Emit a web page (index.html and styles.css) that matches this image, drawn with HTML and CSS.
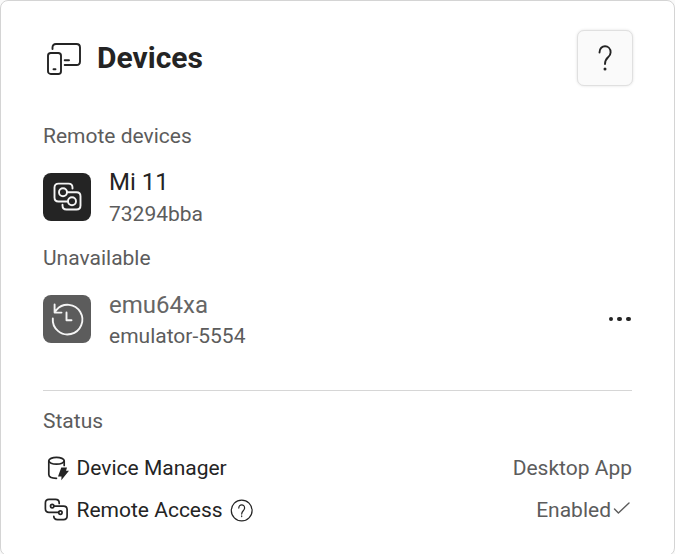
FILE: index.html
```html
<!DOCTYPE html>
<html lang="en">
<head>
<meta charset="utf-8">
<title>Devices</title>
<link rel="stylesheet" href="styles.css">
</head>
<body>
<main class="card">
  <header class="header">
    <svg class="header-icon" width="36" height="34" viewBox="0 0 36 34">
      <path d="M5.500 7V5.500Q5.500 2 9 2H29.500Q33 2 33 5.500V19.500Q33 23 29.500 23H17.700M17.700 18.300H22"/>
      <rect x="1" y="11" width="13" height="21" rx="2.800"/>
      <path d="M6.500 27.200H8.500"/>
    </svg>
    <h1 class="title">Devices</h1>
    <button class="help" aria-label="Help">
      <svg width="16" height="28" viewBox="0 0 16 28"><path d="M2.500 8.500C2.500 0 13.700 .5 13.600 8.400C13.500 14 8 12.500 8 20"/><circle cx="8" cy="25" r="1.500"/></svg>
    </button>
  </header>

  <h2 class="label">Remote devices</h2>
  <section class="device">
    <div class="tile">
      <svg width="48" height="48" viewBox="0 0 48 48"><path d="M29.500 15.500V14.500Q29.500 10.600 25.500 10.600H15.500Q11.500 10.600 11.500 14.500V24.500Q11.500 28.500 15.500 28.500H25M24 19.200H33.500Q37.500 19.200 37.500 23.200V32.500Q37.500 36.500 33.500 36.500H23.500Q19.500 36.500 19.500 32.500V31.700"/><circle cx="20" cy="19.200" r="4"/><circle cx="29" cy="28.200" r="4"/></svg>
    </div>
    <div class="info"><span class="name">Mi 11</span><span class="serial">73294bba</span></div>
  </section>

  <h2 class="label">Unavailable</h2>
  <section class="device offline">
    <div class="tile">
      <svg width="48" height="48" viewBox="0 0 48 48"><path d="M9.800 23.500A14.800 14.800 0 1 0 13.500 14.800L11.800 17M11.600 9.500V17.600H18.500M23.500 17.500V25.300H28.500"/></svg>
    </div>
    <div class="info"><span class="name">emu64xa</span><span class="serial">emulator-5554</span></div>
    <button class="more" aria-label="More"><i></i><i></i><i></i></button>
  </section>

  <section class="status">
    <h2 class="label">Status</h2>
    <div class="row">
      <svg class="row-icon" width="26" height="26" viewBox="0 0 26 26"><ellipse cx="13.500" cy="5.800" rx="7.700" ry="3.400"/><path d="M5.800 6V19.500C5.800 22 9.500 23.200 13.500 23.300M21.200 6V10.500"/><path class="solid" d="M18.300 12.500H24L23 15.800H26L18.300 25.300L18.500 21.500H15Z"/></svg>
      <span class="key">Device Manager</span>
      <span class="value">Desktop App</span>
    </div>
    <div class="row">
      <svg class="row-icon" width="26" height="26" viewBox="0 0 26 26"><path d="M16.200 6.500V6Q16.200 2.300 12.500 2.300H6Q2.400 2.300 2.400 6V11.800Q2.400 15.400 6 15.400H15.500M11 9.100H20.500Q24.100 9.100 24.100 12.700V19Q24.100 22.600 20.500 22.600H14.500Q10.800 22.600 10.800 19.300"/><circle cx="9.200" cy="9.100" r="1.700"/><circle cx="17.400" cy="15.600" r="1.700"/></svg>
      <span class="key">Remote Access</span>
      <svg class="hint" width="24" height="24" viewBox="0 0 24 24"><circle cx="11.700" cy="12.500" r="10.400"/><path d="M8.800 10.100C8.800 5.700 14.700 5.900 14.600 10C14.500 13 11.700 12.500 11.700 16.100M11.700 17.900V18.600"/></svg>
      <span class="value">Enabled<svg class="check" width="21" height="18" viewBox="0 0 21 18"><path d="M3.500 8L7.400 12L18 2"/></svg></span>
    </div>
  </section>
</main>
</body>
</html>
```

FILE: styles.css
```css
* { box-sizing: border-box; }
html { height: 100%; overflow: hidden; }
body {
  margin: 0;
  background: #fafafa;
  color: #242424;
  font: 21px/28px Roboto, "Liberation Sans", sans-serif;
}
svg { display: block; flex: none; fill: none; stroke: currentColor; stroke-width: 1.900; stroke-linecap: round; stroke-linejoin: round; }
button { padding: 0; color: inherit; font: inherit; }
.card {
  height: 556px;
  padding: 29px 42px 0;
  background: #fff;
  border: 1px solid #d4d4d4;
  border-radius: 8px;
}
.header { display: flex; align-items: center; height: 56px; margin-bottom: 36px; }
.header-icon { margin: 2px 14px 0 4px; }
.title { flex: 1; margin: 0; font-size: 30px; font-weight: 700; line-height: 40px; }
.help {
  display: grid;
  place-items: center;
  width: 56px;
  height: 56px;
  margin-right: -1px;
  background: #fafafa;
  border: 1px solid #e0e0e0;
  border-radius: 7px;
  box-shadow: 0 0 3px rgba(0, 0, 0, .12);
}
.help circle { fill: currentColor; stroke: none; }
.label { margin: 0; color: #5c5c5c; font-size: 21px; font-weight: 400; line-height: 28px; }
.device { display: flex; align-items: center; height: 94px; }
.tile { width: 48px; height: 48px; margin-right: 18px; border-radius: 8px; background: #242424; color: #f5f5f5; }
.info { display: flex; flex-direction: column; padding-top: 2px; }
.name { font-size: 24px; line-height: 32px; }
.serial { color: #5c5c5c; font-size: 21px; line-height: 32px; }
.offline .tile { background: #5c5c5c; }
.offline .name { color: #666; }
.offline .serial { line-height: 30px; }
.more { display: flex; gap: 4px; margin: 0 1px 0 auto; background: none; border: 0; }
.more i { width: 4.8px; height: 4.8px; border-radius: 50%; background: #242424; }
.status { margin-top: 24px; padding-top: 16px; border-top: 1px solid #d6d6d6; }
.row { display: flex; align-items: center; height: 42px; }
.status .label { margin-bottom: 12px; }
.row-icon { margin-right: 7.500px; stroke-width: 1.700; }
.row-icon .solid { fill: currentColor; stroke: none; }
.hint { margin-left: 7.500px; stroke-width: 1.200; }
.value { display: flex; align-items: center; margin-left: auto; color: #5c5c5c; }
.check { stroke-width: 1.400; }
```
